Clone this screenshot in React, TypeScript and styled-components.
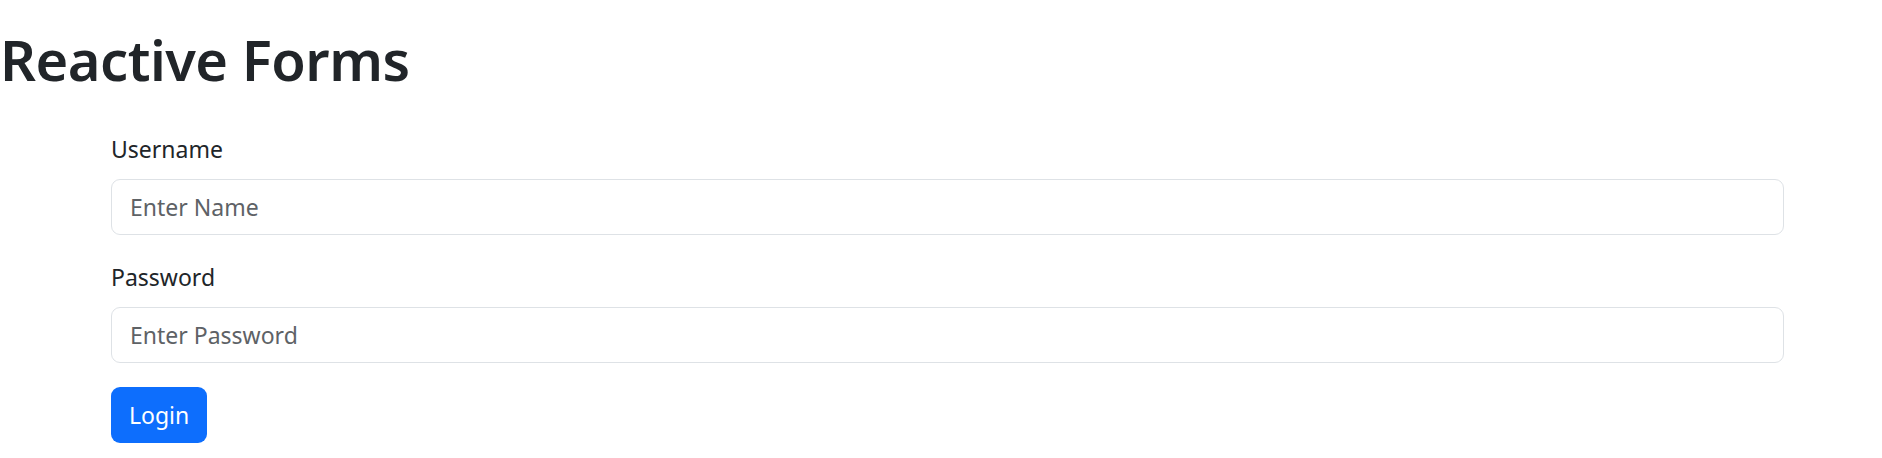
import styled, { createGlobalStyle } from "styled-components";

const GlobalStyle = createGlobalStyle`
    * { box-sizing: border-box; }
    body {
        margin: 0;
        background: #fff;
        color: #212529;
        font-family: "Noto Sans", "Open Sans", sans-serif;
    }
`

const Page = styled.div`
    padding-top: 23px;
`
const Title = styled.h1`
    margin: 0 0 36px 0;
    font-size: 56px;
    font-weight: 600;
    letter-spacing: -0.5px;
    line-height: 72px;
    color: #212529;
`
const Form = styled.form`
    margin-left: 111px;
    width: 1673px;
`
const Field = styled.div`
    margin-bottom: 24px;
`
const Label = styled.label`
    display: block;
    margin-bottom: 12px;
    font-size: 23px;
    line-height: 36px;
`
const Input = styled.input`
    display: block;
    width: 100%;
    height: 56px;
    padding: 0 18px;
    font-family: inherit;
    font-size: 23px;
    color: #212529;
    border: 1.5px solid #dee2e6;
    border-radius: 9px;
    outline: none;
    &::placeholder {
        color: #5e6266;
    }
`
const Button = styled.button`
    height: 56px;
    padding: 0 18px;
    font-family: inherit;
    font-size: 23px;
    color: #fff;
    background: #0d6efd;
    border: none;
    border-radius: 9px;
`

export default function App() {
    return <Page>
        <GlobalStyle />
        <Title>Reactive Forms</Title>
        <Form onSubmit={e => e.preventDefault()}>
            <Field>
                <Label>Username</Label>
                <Input type="text" placeholder="Enter Name" />
            </Field>
            <Field>
                <Label>Password</Label>
                <Input type="password" placeholder="Enter Password" />
            </Field>
            <Button type="submit">Login</Button>
        </Form>
    </Page>
}
